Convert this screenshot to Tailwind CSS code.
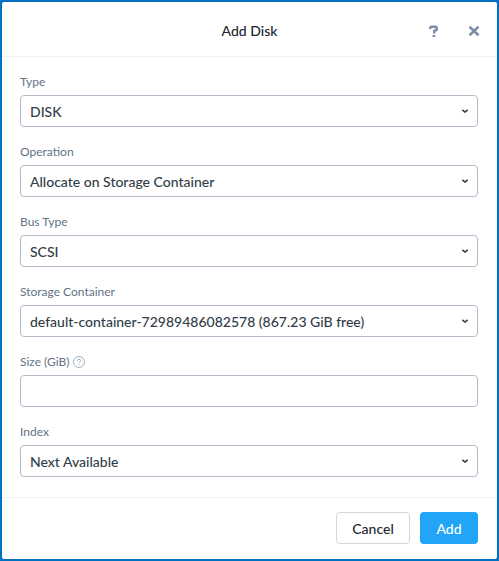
<!DOCTYPE html>
<html lang="en">
<head>
  <meta charset="UTF-8" />
  <meta name="viewport" content="width=device-width, initial-scale=1.0" />
  <title>Add Disk</title>
  <script src="https://cdn.jsdelivr.net/npm/@tailwindcss/browser@4"></script>
</head>
<body class="min-h-screen flex flex-col bg-[#0070c0] p-0.5 font-['Lato','Open_Sans',sans-serif] text-sm text-[#22272e]">
  <form class="grow flex flex-col bg-white rounded-xs">
    <header class="grid grid-cols-[1fr_auto_1fr] items-center border-b border-[#f0f1f3] px-[13px] h-[55px]">
      <h1 class="col-start-2 font-medium pt-1">Add Disk</h1>
      <div class="flex justify-end gap-5 pt-1">
        <button type="button" aria-label="Help" class="size-5 flex items-center justify-center text-[#7b8ea6]">
          <svg class="w-3 h-3" viewBox="0 0 12 12" fill="none" stroke="currentColor" stroke-width="2.4">
            <path d="M2.2 4V3.2Q2.2 1.7 3.7 1.7H7.3Q8.8 1.7 8.8 3.1V3.9Q8.8 5.3 7.4 5.3Q6.2 5.3 6.2 6.4V8.4" />
            <path d="M4.6 11H7.4" stroke-width="2" />
          </svg>
        </button>
        <button type="button" aria-label="Close" class="size-5 flex items-center justify-center text-[#7b8ea6]">
          <svg class="w-3 h-3" viewBox="0 0 12 12" fill="none" stroke="currentColor" stroke-width="2.6">
            <path d="M1.5 1.8L10.5 10.2M10.5 1.8L1.5 10.2" />
          </svg>
        </button>
      </div>
    </header>

    <main class="flex flex-col gap-4 pl-[18px] pr-[19px] pt-4 pb-5">
      <div class="flex flex-col gap-1">
        <label for="type" class="text-xs/[18px] text-[#627386]">Type</label>
        <div class="grid items-center">
          <select id="type" class="col-start-1 row-start-1 h-8 w-full appearance-none rounded-sm border border-[#b5bccb] bg-white px-[9px] pt-0.5 font-medium text-[#323d49]">
            <option>DISK</option>
            <option>CD-ROM</option>
          </select>
          <svg class="col-start-1 row-start-1 justify-self-end mr-[9px] w-2 h-2 pointer-events-none text-[#323d49]" viewBox="0 0 8 8" fill="none" stroke="currentColor" stroke-width="1.6"><path d="M1.3 2.8L4 5L6.7 2.8" /></svg>
        </div>
      </div>

      <div class="flex flex-col gap-1">
        <label for="operation" class="text-xs/[18px] text-[#627386]">Operation</label>
        <div class="grid items-center">
          <select id="operation" class="col-start-1 row-start-1 h-8 w-full appearance-none rounded-sm border border-[#b5bccb] bg-white px-[9px] pt-0.5 font-medium text-[#323d49]">
            <option>Allocate on Storage Container</option>
          </select>
          <svg class="col-start-1 row-start-1 justify-self-end mr-[9px] w-2 h-2 pointer-events-none text-[#323d49]" viewBox="0 0 8 8" fill="none" stroke="currentColor" stroke-width="1.6"><path d="M1.3 2.8L4 5L6.7 2.8" /></svg>
        </div>
      </div>

      <div class="flex flex-col gap-1">
        <label for="bus" class="text-xs/[18px] text-[#627386]">Bus Type</label>
        <div class="grid items-center">
          <select id="bus" class="col-start-1 row-start-1 h-8 w-full appearance-none rounded-sm border border-[#b5bccb] bg-white px-[9px] pt-0.5 font-medium text-[#323d49]">
            <option>SCSI</option>
          </select>
          <svg class="col-start-1 row-start-1 justify-self-end mr-[9px] w-2 h-2 pointer-events-none text-[#323d49]" viewBox="0 0 8 8" fill="none" stroke="currentColor" stroke-width="1.6"><path d="M1.3 2.8L4 5L6.7 2.8" /></svg>
        </div>
      </div>

      <div class="flex flex-col gap-1">
        <label for="container" class="text-xs/[18px] text-[#627386]">Storage Container</label>
        <div class="grid items-center">
          <select id="container" class="col-start-1 row-start-1 h-8 w-full appearance-none rounded-sm border border-[#b5bccb] bg-white px-[9px] pt-0.5 font-medium text-[#323d49]">
            <option>default-container-72989486082578 (867.23 GiB free)</option>
          </select>
          <svg class="col-start-1 row-start-1 justify-self-end mr-[9px] w-2 h-2 pointer-events-none text-[#323d49]" viewBox="0 0 8 8" fill="none" stroke="currentColor" stroke-width="1.6"><path d="M1.3 2.8L4 5L6.7 2.8" /></svg>
        </div>
      </div>

      <div class="flex flex-col gap-1">
        <div class="flex items-center gap-1">
          <label for="size" class="text-xs/[18px] text-[#627386]">Size (GiB)</label>
          <svg class="w-3 h-3 text-[#a3afbe]" viewBox="0 0 12 12" fill="none" stroke="currentColor" role="img" aria-label="Help">
            <circle cx="6" cy="6" r="5.5" />
            <path d="M4.4 4.8Q4.4 3.3 6 3.3T7.6 4.7Q7.6 5.5 6.7 5.9T6 7.2M6 8.2V9.2" />
          </svg>
        </div>
        <input id="size" type="text" class="h-8 w-full rounded-sm border border-[#b5bccb] bg-white px-[9px] pt-0.5 font-medium text-[#323d49]" />
      </div>

      <div class="flex flex-col gap-1">
        <label for="index" class="text-xs/[18px] text-[#627386]">Index</label>
        <div class="grid items-center">
          <select id="index" class="col-start-1 row-start-1 h-8 w-full appearance-none rounded-sm border border-[#b5bccb] bg-white px-[9px] pt-0.5 font-medium text-[#323d49]">
            <option>Next Available</option>
          </select>
          <svg class="col-start-1 row-start-1 justify-self-end mr-[9px] w-2 h-2 pointer-events-none text-[#323d49]" viewBox="0 0 8 8" fill="none" stroke="currentColor" stroke-width="1.6"><path d="M1.3 2.8L4 5L6.7 2.8" /></svg>
        </div>
      </div>
    </main>

    <footer class="flex justify-end gap-[10px] border-t border-[#f0f1f3] pl-[18px] pr-[19px] py-[14px]">
      <button type="button" class="h-8 w-[74px] rounded-sm border border-[#d3d8e0] pt-0.5 font-medium">Cancel</button>
      <button type="submit" class="h-8 w-[58px] rounded-sm bg-[#22a5f7] pt-0.5 font-medium text-white">Add</button>
    </footer>
  </form>
</body>
</html>
